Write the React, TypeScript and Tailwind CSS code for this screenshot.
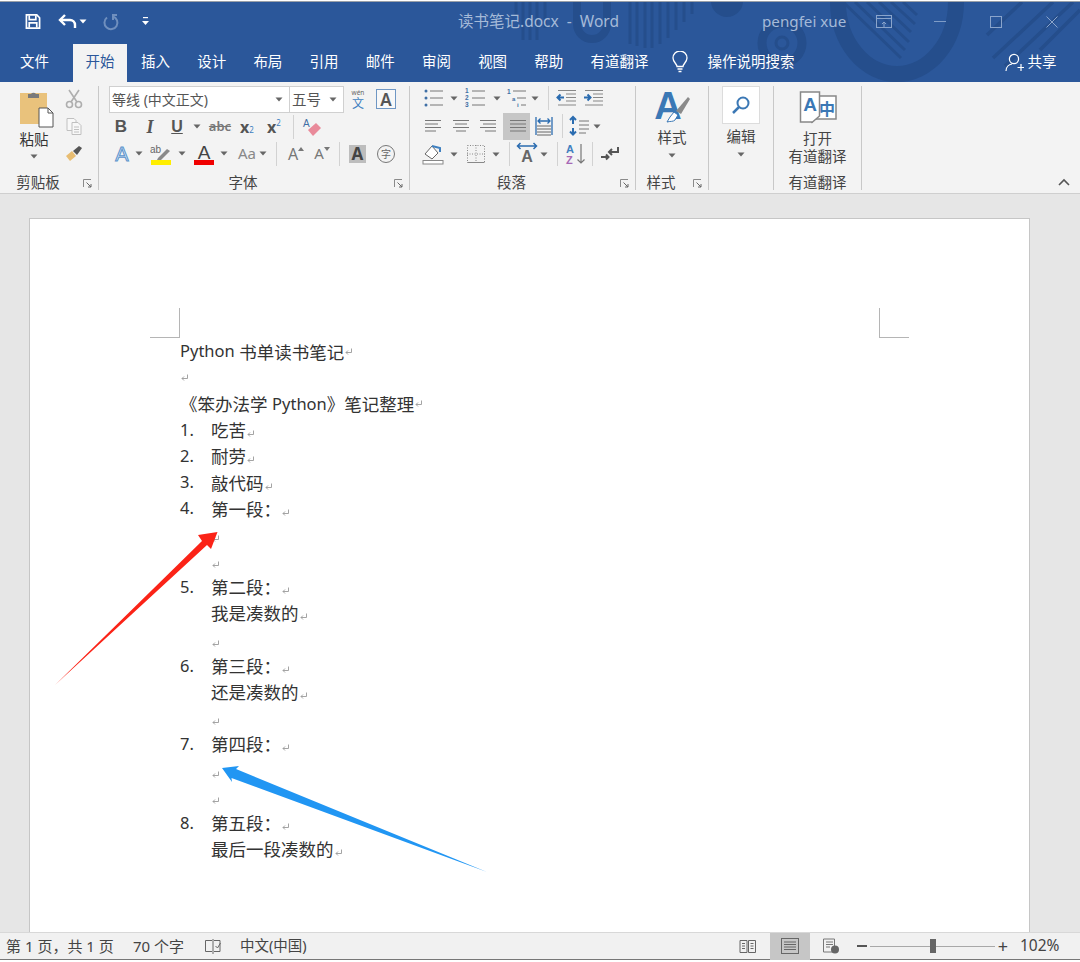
import React from "react";

const Caret = ({ c = "#666" }: { c?: string }) => (
  <svg width="8" height="5" viewBox="0 0 8 5"><path d="M0.5 0.5h7L4 4.5z" fill={c} /></svg>
);

const Launcher = () => (
  <svg width="9" height="9" viewBox="0 0 9 9" fill="none" stroke="#8a8a8a" strokeWidth="1">
    <path d="M0.5 8V0.5H8" />
    <path d="M3.5 3.5L8 8M8 5v3H5" stroke="#666" />
  </svg>
);

const Sep = ({ className }: { className: string }) => <div className={`w-px h-[24px] bg-[#d2d2d2] ${className}`} />;

const Cell = ({ className, children }: { className: string; children?: React.ReactNode }) => (
  <div className={`flex items-center justify-center shrink-0 ${className}`}>{children}</div>
);

const Lines = ({ xs }: { xs: [number, number][] }) => (
  <svg width="24" height="20" viewBox="0 0 24 20" stroke="#777" strokeWidth="1">
    {xs.map(([a, b], i) => (
      <path key={i} d={`M${a} ${4.5 + i * 3.5}H${b}`} />
    ))}
  </svg>
);

const Bullets = () => (
  <svg width="24" height="22" viewBox="0 0 24 22">
    <g fill="#3f6fa5"><circle cx="5" cy="4" r="1.5" /><circle cx="5" cy="11" r="1.5" /><circle cx="5" cy="18" r="1.5" /></g>
    <path d="M9 4h13M9 11h13M9 18h13" stroke="#777" strokeWidth="1" />
  </svg>
);
const Numbered = () => (
  <svg width="24" height="24" viewBox="0 0 24 24">
    <text x="2" y="7" fontSize="6.5" fill="#3f6fa5" fontFamily="Liberation Sans" fontWeight="700">1</text>
    <text x="2" y="14" fontSize="6.5" fill="#3f6fa5" fontFamily="Liberation Sans" fontWeight="700">2</text>
    <text x="2" y="21" fontSize="6.5" fill="#3f6fa5" fontFamily="Liberation Sans" fontWeight="700">3</text>
    <path d="M9 5h13M9 12h13M9 19h13" stroke="#777" strokeWidth="1" />
  </svg>
);
const Multi = () => (
  <svg width="24" height="24" viewBox="0 0 24 24">
    <text x="2" y="8" fontSize="6.5" fill="#3f6fa5" fontFamily="Liberation Sans" fontWeight="700">1</text>
    <text x="7" y="14.5" fontSize="6" fill="#3f6fa5" fontFamily="Liberation Sans" fontWeight="700">a</text>
    <text x="12" y="21" fontSize="6" fill="#3f6fa5" fontFamily="Liberation Sans" fontWeight="700">i</text>
    <path d="M8 5h13M12 12h9M16 19h5" stroke="#777" strokeWidth="1" />
  </svg>
);
const Indent = ({ flip }: { flip?: boolean }) => (
  <svg width="24" height="20" viewBox="0 0 24 20">
    <path d="M3 2.5h18M11 6h10M11 9.5h10M11 13h10M3 17h18" stroke="#888" strokeWidth="1.2" fill="none" />
    {flip ? (
      <path d="M2 9.5h6M5.5 6.5l3 3-3 3" stroke="#2b6cb0" strokeWidth="2" fill="none" />
    ) : (
      <path d="M9 9.5H3M5.5 6.5l-3 3 3 3" stroke="#2b6cb0" strokeWidth="2" fill="none" />
    )}
  </svg>
);

const Mark = () => (
  <svg width="8" height="8" viewBox="0 0 8 8" className="inline-block ml-px align-[-1px]" fill="none" stroke="#9a9a9a" strokeWidth="0.9">
    <path d="M6.5 0.5v4H1M3 2.5L1 4.5l2 2" />
  </svg>
);

const Py = () => <span className="text-[16.5px]">Python</span>;

const Line = ({ n, children }: { n?: string; children?: React.ReactNode }) => (
  <div className="flex h-[26.2px] items-center">
    <div className="w-[31px] shrink-0 text-[16.5px]">{n}</div>
    <div className="whitespace-nowrap">
      {children}
      <Mark />
    </div>
  </div>
);

export default function App() {
  const latin = "[font-family:'Noto_Sans','Noto_Sans_CJK_SC',sans-serif]";

  return (
    <div className={`w-[1080px] h-[962px] bg-white overflow-hidden flex flex-col ${latin}`}>
      <div className="h-[2px] shrink-0 bg-white border-b border-[#9aa0a8]" />

      {/* header */}
      <div className="relative h-[80px] shrink-0 bg-[#2b579a] overflow-hidden">
        <svg className="absolute inset-0" width="1080" height="80" viewBox="0 0 1080 80" fill="none" stroke="#254e8c">
          <g transform="translate(0,-2)">
            <path d="M516 2v14M523 2v38M530 2v38M537 2v38M545 2v26" strokeWidth="3" />
            <path d="M577 2v22a15 15 0 0 0 30 0V2" strokeWidth="8" />
            <path d="M630 2v42M637 2v44M645 2v46M652 2v46M660 2v42M668 2v36M676 2v28M684 2v20M692 2v12" strokeWidth="3" />
            <circle cx="727" cy="1" r="16" fill="#254e8c" stroke="none" />
            <circle cx="782" cy="43" r="20" strokeWidth="9" />
            <circle cx="782" cy="43" r="6" strokeWidth="3" />
            <path d="M838 2a59 72 0 0 0 118 0" strokeWidth="16" />
            <path d="M843 2l58 56M855 2l50 48M867 2l42 40M879 2l32 30M891 2l24 22M903 2l14 13" strokeWidth="3" />
            <path d="M987 35l35-33M993 58l60-56M1005 66l68-64M1040 50l40-40" strokeWidth="3.5" />
          </g>
        </svg>

        <div className="relative flex items-center h-[39px]">
          <Cell className="w-[16px] ml-[25px]">
            <svg width="17" height="17" viewBox="0 0 17 17" fill="none" stroke="#fff" strokeWidth="1.8">
              <path d="M1.5 1.5h11l3 3v11h-14z" />
              <path d="M4.5 2v4.5h7V2M4.5 15v-5h8v5" />
            </svg>
          </Cell>
          <Cell className="w-[20px] ml-[17px]">
            <svg width="20" height="16" viewBox="0 0 20 16" fill="none" stroke="#fff" strokeWidth="2.4">
              <path d="M2 6h10a5 5 0 0 1 5 5v3" />
              <path d="M7 1L2 6l5 5" />
            </svg>
          </Cell>
          <Cell className="w-[8px] ml-[1px]"><Caret c="#fff" /></Cell>
          <Cell className="w-[18px] ml-[15px]">
            <svg width="18" height="18" viewBox="0 0 18 18" fill="none" stroke="#6f8fbe" strokeWidth="2">
              <path d="M11 3.5a6.5 6.5 0 1 1-6 1" />
              <path d="M11 1v6" />
              <path d="M11 2l4 0" />
            </svg>
          </Cell>
          <Cell className="w-[8px] ml-[21px]">
            <svg width="7" height="9" viewBox="0 0 7 9" fill="#fff"><rect x="1" y="0" width="5" height="1.2" /><path d="M0 4h7L3.5 8z" /></svg>
          </Cell>
          <div className="ml-[309px] text-[15.5px] text-[#a5bad8] whitespace-pre w-[162px] leading-none">读书笔记.docx  -  Word</div>
          <div className="ml-[142px] text-[15.2px] text-[#a5bad8] whitespace-nowrap w-[86px] leading-none">pengfei xue</div>
          <Cell className="w-[16px] ml-[28px]">
            <svg width="16" height="13" viewBox="0 0 16 13" fill="none" stroke="#8aa4cb"><rect x="0.5" y="0.5" width="15" height="12" /><path d="M0.5 3.5h15M8 7v5M6 9l2-2 2 2" /></svg>
          </Cell>
          <Cell className="w-[12px] ml-[42px]"><div className="w-[12px] h-px bg-[#7f9cc6]" /></Cell>
          <Cell className="w-[12px] ml-[44px]"><div className="w-[12px] h-[12px] border border-[#8aa4cb]" /></Cell>
          <Cell className="w-[12px] ml-[44px]">
            <svg width="12" height="12" viewBox="0 0 12 12" stroke="#8aa4cb"><path d="M0.5 0.5l11 11M11.5 0.5l-11 11" /></svg>
          </Cell>
        </div>

        <div className="relative flex items-start h-[41px] text-[14.5px] text-white">
          <div className="w-[69px] h-[36px] mt-[3px] flex items-center justify-center">文件</div>
          <div className="ml-[4px] mt-[3px] w-[54px] h-[38px] pb-[2px] bg-[#f3f3f3] text-[#2b579a] flex items-center justify-center">开始</div>
          <div className="w-[14px]" />
          {["插入", "设计", "布局", "引用", "邮件", "审阅", "视图", "帮助"].map((t) => (
            <div key={t} className="w-[56.2px] h-[36px] mt-[3px] flex items-center whitespace-nowrap">{t}</div>
          ))}
          <div className="h-[36px] mt-[3px] flex items-center whitespace-nowrap w-[60px]">有道翻译</div>
          <div className="ml-[19px] w-[20px] h-[36px] mt-[3px] flex items-center justify-center">
            <svg width="16" height="22" viewBox="0 0 16 22" fill="none" stroke="#fff" strokeWidth="1.3">
              <path d="M5 15.5c0-2.5-4-4.5-4-8.5a7 7 0 0 1 14 0c0 4-4 6-4 8.5z" />
              <path d="M5.5 18h5M6.5 20.5h3" />
            </svg>
          </div>
          <div className="ml-[18px] h-[36px] mt-[3px] flex items-center whitespace-nowrap w-[90px]">操作说明搜索</div>
          <div className="ml-[207px] w-[20px] h-[36px] mt-[3px] flex items-center justify-center">
            <svg width="19" height="19" viewBox="0 0 19 19" fill="none" stroke="#fff" strokeWidth="1.2">
              <circle cx="9" cy="6" r="4.6" />
              <path d="M1 18c0-4 3-6.5 6-7M16 11v7M12.5 14.5h7" />
            </svg>
          </div>
          <div className="ml-[3px] h-[36px] mt-[3px] flex items-center whitespace-nowrap">共享</div>
        </div>
      </div>

      {/* ribbon */}
      <div className="h-[112px] shrink-0 bg-[#f3f3f3] border-b border-[#cfcfcf] flex pt-[4px] text-[14px] text-[#444] leading-none">
        {/* clipboard */}
        <div className="w-[99px] h-[104px] border-r border-[#c8c8c8] flex flex-col shrink-0">
          <div className="h-[88px] flex">
            <div className="ml-[3px] w-[62px] flex flex-col items-center">
              <svg width="36" height="38" viewBox="0 0 36 38" className="mt-[4px] ml-[5px]">
                <rect x="1" y="3" width="27" height="31" fill="#e9c27c" />
                <path d="M9 4h3a3 3 0 0 1 5 0h3v4H9z" fill="#7a7a7a" />
                <path d="M20 18h9l5 5v14H20z" fill="#fff" stroke="#555" strokeWidth="1" />
                <path d="M29 18v5h5" fill="none" stroke="#555" strokeWidth="1" />
              </svg>
              <div className="mt-[2px] text-[14.5px] leading-[18px] text-[#333]">粘贴</div>
              <div className="mt-[6px]"><Caret /></div>
            </div>
            <div className="w-[16px] ml-px flex flex-col items-center shrink-0">
              <svg width="18" height="20" viewBox="0 0 18 20" className="mt-[3px] shrink-0" fill="none" stroke="#aeaeae" strokeWidth="1.6">
                <circle cx="4.5" cy="15.5" r="3" /><circle cx="13.5" cy="15.5" r="3" />
                <path d="M6 13L14 1M12 13L4 1" />
              </svg>
              <svg width="18" height="18" viewBox="0 0 18 18" className="mt-[8px] shrink-0" fill="#f8f8f8" stroke="#c0c0c0">
                <path d="M2 1.5h7l2 2v10H2z" /><path d="M7 5.5h6l3 3v9H7z" />
                <path d="M9 10h5M9 12.5h5M9 15h5" />
              </svg>
              <svg width="18" height="16" viewBox="0 0 18 16" className="mt-[11px] shrink-0">
                <path d="M1 10l6-5 4 5-6 5z" fill="#e8bd72" />
                <path d="M8 5l4 4 5-7-3-2z" fill="#555" />
              </svg>
            </div>
          </div>
          <div className="flex h-[16px] items-center">
            <div className="flex-1 text-center text-[14.5px]">剪贴板</div>
            <div className="w-[22px] flex justify-center pt-[3px]"><Launcher /></div>
          </div>
        </div>

        {/* font */}
        <div className="w-[311px] h-[104px] border-r border-[#c8c8c8] flex flex-col shrink-0">
          <div className="h-[88px] flex flex-col">
            <div className="flex h-[27px] items-start">
              <div className="ml-[10px] w-[181px] h-[27px] bg-white border border-[#d0d0d0] flex items-center pl-[2px] pr-[6px] justify-between text-[14px] text-[#555]">
                <span>等线 (中文正文)</span><Caret />
              </div>
              <div className="-ml-px w-[55px] h-[27px] bg-white border border-[#d0d0d0] flex items-center pl-[2px] pr-[6px] justify-between text-[#555]">
                <span className="text-[14.5px]">五号</span><Caret />
              </div>
              <Cell className="ml-[5px] w-[18px] h-[27px]">
                <div className="flex flex-col items-center gap-[2px] leading-none">
                  <span className="text-[6.5px] text-[#666] h-[7px] leading-[7px]">wén</span>
                  <span className="text-[12px] text-[#3f7fc0] h-[12px] leading-[12px]">文</span>
                </div>
              </Cell>
              <Cell className="ml-[9px] w-[20px] h-[20px] mt-[3px] border border-[#6f97c4] bg-[#f8f8f8] text-[17px] font-semibold text-[#555]">A</Cell>
            </div>
            <div className="flex h-[27px] items-center text-[#555]">
              <Cell className="ml-[10px] w-[24px] text-[17px] font-bold [font-family:'Liberation_Sans']">B</Cell>
              <Cell className="w-[34px] text-[18px] font-bold italic [font-family:'Liberation_Serif']">I</Cell>
              <Cell className="w-[20px] text-[16px] font-bold underline [font-family:'Liberation_Sans']">U</Cell>
              <Cell className="w-[20px]"><Caret /></Cell>
              <Cell className="w-[26px] text-[13px] line-through font-semibold text-[#777]">abc</Cell>
              <Cell className="w-[28px] text-[16px] font-bold">x<span className="text-[8px] text-[#3f7fc0] font-normal mt-[7px]">2</span></Cell>
              <Cell className="w-[26px] text-[16px] font-bold">x<span className="text-[8px] text-[#3f7fc0] font-normal -mt-[8px]">2</span></Cell>
              <Cell className="w-[12px]"><Sep className="" /></Cell>
              <Cell className="w-[26px]">
                <svg width="20" height="20" viewBox="0 0 20 20">
                  <text x="1" y="10" fontSize="10" fill="#3f6fa5" fontFamily="Liberation Sans">A</text>
                  <path d="M6 13l8-7 5 5-8 8z" fill="#e98a9a" />
                </svg>
              </Cell>
            </div>
            <div className="flex h-[27px] items-center text-[#555]">
              <Cell className="ml-[11px] w-[24px]">
                <svg width="22" height="24" viewBox="0 0 22 24">
                  <text x="11" y="19" textAnchor="middle" fontSize="20" fontFamily="Liberation Sans" fill="#dbe9f7" stroke="#5b93cc" strokeWidth="1">A</text>
                </svg>
              </Cell>
              <Cell className="w-[8px] ml-px"><Caret /></Cell>
              <Cell className="w-[26px] ml-[5px] h-[24px]">
                <svg width="22" height="24" viewBox="0 0 22 24">
                  <text x="0" y="11" fontSize="10" fill="#666" fontFamily="Liberation Sans">ab</text>
                  <path d="M8 16L17 7l3 2-9 9H7z" fill="#8a8a8a" />
                  <rect x="1" y="18" width="20" height="5" fill="#ffee00" />
                </svg>
              </Cell>
              <Cell className="w-[8px] ml-[4px]"><Caret /></Cell>
              <Cell className="w-[24px] ml-[6px] h-[24px]">
                <svg width="22" height="24" viewBox="0 0 22 24">
                  <text x="11" y="17" textAnchor="middle" fontSize="19" fontFamily="Liberation Sans" fill="#444">A</text>
                  <rect x="1" y="18" width="20" height="5" fill="#f00000" />
                </svg>
              </Cell>
              <Cell className="w-[8px] ml-[4px]"><Caret /></Cell>
              <Cell className="w-[26px] ml-[6px] text-[15px] text-[#888]">Aa</Cell>
              <Cell className="w-[8px] -ml-px"><Caret /></Cell>
              <Cell className="ml-[9px] w-px"><Sep className="" /></Cell>
              <Cell className="w-[20px] ml-[9px] text-[#777] text-[16px]">
                A<svg width="6" height="4" viewBox="0 0 6 4" className="mb-[10px]"><path d="M0 4l3-4 3 4z" fill="#777" /></svg>
              </Cell>
              <Cell className="w-[20px] ml-[6px] text-[#777] text-[15px]">
                A<svg width="6" height="4" viewBox="0 0 6 4" className="mb-[10px]"><path d="M0 0l3 4 3-4z" fill="#777" /></svg>
              </Cell>
              <Cell className="ml-[7px] w-px"><Sep className="" /></Cell>
              <Cell className="ml-[9px] w-[17px] h-[18px] bg-[#bdbdbd] text-[17px] font-bold text-[#444]">A</Cell>
              <Cell className="ml-[11px] w-[18px] h-[18px] rounded-full border border-[#777] text-[10px] text-[#666]">字</Cell>
            </div>
          </div>
          <div className="flex h-[16px] items-center">
            <div className="flex-1 text-center text-[14.5px]">字体</div>
            <div className="w-[22px] flex justify-center pt-[3px]"><Launcher /></div>
          </div>
        </div>

        {/* paragraph */}
        <div className="w-[226px] h-[104px] border-r border-[#c8c8c8] flex flex-col shrink-0">
          <div className="h-[88px] -mt-[2px] flex flex-col mb-[2px]">
            <div className="flex h-[28px] items-center">
              <Cell className="w-[24px] ml-[11px]"><Bullets /></Cell>
              <Cell className="w-[8px] ml-[5px]"><Caret /></Cell>
              <Cell className="w-[24px] ml-[5px]"><Numbered /></Cell>
              <Cell className="w-[8px] ml-[6px]"><Caret /></Cell>
              <Cell className="w-[24px] ml-[4px]"><Multi /></Cell>
              <Cell className="w-[8px] ml-[2px]"><Caret /></Cell>
              <Sep className="ml-[9px] shrink-0" />
              <Cell className="w-[24px] ml-[6px]"><Indent /></Cell>
              <Cell className="w-[24px] ml-[3px]"><Indent flip /></Cell>
            </div>
            <div className="flex h-[28px] items-center">
              <Cell className="w-[24px] ml-[11px]"><Lines xs={[[4, 20], [4, 17], [4, 20], [4, 15]]} /></Cell>
              <Cell className="w-[24px] ml-[4px]"><Lines xs={[[4, 20], [6, 18], [4, 20], [7, 17]]} /></Cell>
              <Cell className="w-[24px] ml-[3px]"><Lines xs={[[4, 20], [7, 20], [4, 20], [9, 20]]} /></Cell>
              <Cell className="w-[27px] h-[27px] ml-[3px] bg-[#c6c6c6]"><Lines xs={[[5, 21], [5, 21], [5, 21], [5, 21]]} /></Cell>
              <Cell className="w-[24px] ml-[2px]">
                <svg width="20" height="20" viewBox="0 0 20 20" fill="none">
                  <path d="M2 1v18M18 1v18" stroke="#2b6cb0" strokeWidth="1.3" />
                  <path d="M4 5h12M6.5 2.5L4 5l2.5 2.5M13.5 2.5L16 5l-2.5 2.5" stroke="#2b6cb0" strokeWidth="1.3" />
                  <path d="M3 10h14M3 13h14M3 16h14M3 19h14" stroke="#666" />
                </svg>
              </Cell>
              <Sep className="ml-[6px] shrink-0" />
              <Cell className="w-[24px] ml-[5px]">
                <svg width="22" height="22" viewBox="0 0 22 22" fill="none">
                  <path d="M4 3v6M1 5l3-3 3 3M4 13v6M1 16.5l3 3 3-3" stroke="#2b6cb0" strokeWidth="2" />
                  <path d="M10 6h10M10 10h10M10 14h10M10 18h7" stroke="#777" />
                </svg>
              </Cell>
              <Cell className="w-[8px] ml-px"><Caret /></Cell>
            </div>
            <div className="flex h-[28px] items-center">
              <Cell className="w-[24px] ml-[11px]">
                <svg width="22" height="22" viewBox="0 0 22 22" fill="none">
                  <path d="M3 11l7-8 6 7-6 6z" fill="#fff" stroke="#666" />
                  <path d="M10 3l8 2v4" stroke="#3f80c0" strokeWidth="2" />
                  <rect x="1" y="17.5" width="20" height="3.5" fill="#fff" stroke="#888" />
                </svg>
              </Cell>
              <Cell className="w-[8px] ml-[5px]"><Caret /></Cell>
              <Cell className="w-[24px] ml-[6px]">
                <svg width="20" height="20" viewBox="0 0 20 20" fill="none" stroke="#888">
                  <rect x="1.5" y="1.5" width="17" height="17" strokeDasharray="1 1.5" />
                  <path d="M1 10h18M10 1v18" strokeDasharray="1 1.5" />
                  <path d="M1.5 18.5h17" />
                </svg>
              </Cell>
              <Cell className="w-[8px] ml-[4px]"><Caret /></Cell>
              <Sep className="ml-[9px] shrink-0" />
              <Cell className="w-[24px] ml-[5px]">
                <svg width="24" height="24" viewBox="0 0 24 24">
                  <path d="M3 4l9 0M12 4l9 0M5.5 1L2.5 4l3 3M18.5 1l3 3-3 3" stroke="#2b6cb0" strokeWidth="1.5" fill="none" />
                  <text x="12" y="20" textAnchor="middle" fontSize="16" fontWeight="700" fontFamily="Liberation Sans" fill="#666">A</text>
                </svg>
              </Cell>
              <Cell className="w-[8px] ml-px"><Caret /></Cell>
              <Sep className="ml-[9px] shrink-0" />
              <Cell className="w-[22px] ml-[7px]">
                <svg width="22" height="26" viewBox="0 0 22 26">
                  <text x="1" y="12" fontSize="11" fontWeight="700" fontFamily="Liberation Sans" fill="#3f80c0">A</text>
                  <text x="1" y="23" fontSize="11" fontWeight="700" fontFamily="Liberation Sans" fill="#a668b5">Z</text>
                  <path d="M16 3v19M12.5 18.5l3.5 3.5 3.5-3.5" stroke="#777" strokeWidth="1.2" fill="none" />
                </svg>
              </Cell>
              <Sep className="ml-[5px] shrink-0" />
              <Cell className="w-[22px] ml-[6px]">
                <svg width="20" height="18" viewBox="0 0 20 18" fill="none" strokeWidth="2">
                  <path d="M18 2v5h-9M12 4L9 7l3 3" stroke="#555" />
                  <path d="M1 12h7M6 9.5l2.5 2.5L6 14.5" stroke="#555" />
                </svg>
              </Cell>
            </div>
          </div>
          <div className="flex h-[16px] items-center">
            <div className="flex-1 text-center text-[14.5px]">段落</div>
            <div className="w-[22px] flex justify-center pt-[3px]"><Launcher /></div>
          </div>
        </div>

        {/* styles */}
        <div className="w-[73px] h-[104px] border-r border-[#c8c8c8] flex flex-col shrink-0">
          <div className="h-[88px] flex flex-col items-center">
            <svg width="38" height="41" viewBox="0 0 38 41" className="shrink-0">
              <text x="15" y="33" textAnchor="middle" fontSize="38" fontWeight="700" fontFamily="Liberation Sans" fill="#3b78b5">A</text>
              <path d="M17 31l4-5 4 3-3 5c-2 2-5 1-8 2z" fill="#fff" stroke="#3b78b5" />
              <path d="M23 25l12-14 2 2-9 15z" fill="#8a8a8a" />
            </svg>
            <div className="text-[14.5px] leading-[18px] mt-[1px]">样式</div>
            <div className="mt-[7px]"><Caret /></div>
          </div>
          <div className="flex h-[16px] items-center">
            <div className="flex-1 text-center text-[14.5px]">样式</div>
            <div className="w-[22px] flex justify-center pt-[3px]"><Launcher /></div>
          </div>
        </div>

        {/* editing */}
        <div className="w-[65px] h-[104px] border-r border-[#c8c8c8] flex flex-col shrink-0">
          <div className="h-[88px] flex flex-col items-center">
            <Cell className="w-[38px] h-[38px] bg-white border border-[#dcdcdc]">
              <svg width="20" height="20" viewBox="0 0 20 20" fill="none" stroke="#3b78b5" strokeWidth="2">
                <circle cx="12" cy="8" r="5.5" />
                <path d="M8 12l-6 6" strokeWidth="2.5" />
              </svg>
            </Cell>
            <div className="mt-[3px] text-[14.5px] leading-[18px]">编辑</div>
            <div className="mt-[7px]"><Caret /></div>
          </div>
        </div>

        {/* translate */}
        <div className="w-[88px] h-[104px] border-r border-[#c8c8c8] flex flex-col shrink-0">
          <div className="h-[88px] flex flex-col items-center">
            <svg width="38" height="34" viewBox="0 0 38 34" className="mt-[5px] shrink-0">
              <path d="M20 5h17v23H13v4l-1-4" fill="#fff" stroke="#888" strokeWidth="1.5" />
              <path d="M1.5 1h19v24l-7 6H1.5z" fill="#fff" stroke="#888" strokeWidth="1.5" />
              <text x="11" y="20" textAnchor="middle" fontSize="19" fontWeight="700" fontFamily="Liberation Sans" fill="#3b78b5">A</text>
              <text x="28" y="24" textAnchor="middle" fontSize="16" fontWeight="700" fontFamily="Noto Sans CJK SC" fill="#3b78b5">中</text>
            </svg>
            <div className="mt-[4px] text-[14.5px] leading-[18px]">打开</div>
            <div className="text-[14.5px] leading-[18px] whitespace-nowrap">有道翻译</div>
          </div>
          <div className="flex h-[16px] items-center justify-center text-[14.5px]">有道翻译</div>
        </div>

        <div className="flex-1 flex items-end justify-end pb-[7px] pr-[10px]">
          <svg width="12" height="8" viewBox="0 0 12 8" fill="none" stroke="#555" strokeWidth="1.6"><path d="M1 7l5-5 5 5" /></svg>
        </div>
      </div>

      {/* document area */}
      <div className="flex-1 min-h-0 bg-[#e6e6e6] pl-[29px] pt-[24px] overflow-hidden">
        <div className="relative w-[1001px] h-[800px] bg-white border border-[#c6c6c6] pl-[150px] pt-[119.6px] text-[17.5px] text-[#333]">
          <div className="absolute left-[120px] top-[89px] w-[30px] h-[30px] border-r border-b border-[#b5b5b5]" />
          <div className="absolute left-[849px] top-[89px] w-[30px] h-[30px] border-l border-b border-[#b5b5b5]" />
          <div className="flex h-[26.2px] items-center whitespace-pre"><Py /> 书单读书笔记<Mark /></div>
          <div className="flex h-[26.2px] items-center"><Mark /></div>
          <div className="flex h-[26.2px] items-center whitespace-pre">《笨办法学 <Py />》笔记整理<Mark /></div>
          <Line n="1.">吃苦</Line>
          <Line n="2.">耐劳</Line>
          <Line n="3.">敲代码</Line>
          <Line n="4.">第一段：</Line>
          <Line />
          <Line />
          <Line n="5.">第二段：</Line>
          <Line>我是凑数的</Line>
          <Line />
          <Line n="6.">第三段：</Line>
          <Line>还是凑数的</Line>
          <Line />
          <Line n="7.">第四段：</Line>
          <Line />
          <Line />
          <Line n="8.">第五段：</Line>
          <Line>最后一段凑数的</Line>

          <svg className="absolute left-[-30px] top-[-219px]" width="1080" height="962" viewBox="0 0 1080 962">
            <path d="M55 685L202 541L198 535L217.5 532L211 549L207 545Z" fill="#fb2317" />
            <path d="M487 872L236 769L239 766L222 768L232 782L231.5 778Z" fill="#2196f3" />
          </svg>
        </div>
      </div>

      {/* status bar */}
      <div className="h-[28px] shrink-0 bg-[#f1f1f1] border-t border-[#d8d8d8] border-b border-b-[#777] flex items-center text-[14.5px] text-[#444] whitespace-nowrap">
        <div className="ml-[6px] w-[107px] text-[15px]">第 1 页，共 1 页</div>
        <div className="ml-[20px] w-[51px] text-[15px]">70 个字</div>
        <Cell className="ml-[20px] w-[18px]">
          <svg width="18" height="15" viewBox="0 0 18 15" fill="none" stroke="#666">
            <path d="M8 1.5H1.5v11H8M10 1.5h6v11h-6" /><path d="M9 0v15" /><path d="M11.5 7l2 2 3-5" />
          </svg>
        </Cell>
        <div className="ml-[18px] w-[68px]">中文(中国)</div>
        <Cell className="ml-[431px] w-[18px]">
          <svg width="18" height="15" viewBox="0 0 18 15" fill="none" stroke="#666">
            <path d="M1 1.5h7v12H1zM9.5 1.5h7v12h-7z" /><path d="M3 4.5h3M3 7h3M3 9.5h3M11.5 4.5h3M11.5 7h3M11.5 9.5h3" />
          </svg>
        </Cell>
        <Cell className="ml-[13px] w-[40px] h-[27px] bg-[#c6c6c6]">
          <svg width="18" height="16" viewBox="0 0 18 16" fill="none" stroke="#666">
            <rect x="0.5" y="0.5" width="17" height="15" /><path d="M3 4h12M3 6.5h12M3 9h12M3 11.5h12" />
          </svg>
        </Cell>
        <Cell className="ml-[12px] w-[18px]">
          <svg width="18" height="16" viewBox="0 0 18 16" fill="none">
            <path d="M1.5 1h11v13h-11zM4 4h7M4 6.5h7M4 9h4" stroke="#777" />
            <circle cx="13" cy="11.5" r="4" fill="#666" />
          </svg>
        </Cell>
        <div className="ml-[17px] w-[10px] h-[2px] bg-[#555]" />
        <div className="relative ml-[3px] w-[125px] h-px bg-[#a8a8a8]">
          <div className="absolute left-[60px] -top-[7px] w-[6px] h-[14px] bg-[#666]" />
        </div>
        <div className="ml-[2px] text-[18px] leading-none text-[#444] w-[12px] text-center">+</div>
        <div className="ml-[11px] text-[15.5px]">102%</div>
      </div>
      <div className="h-[2px] shrink-0 bg-white" />
    </div>
  );
}
